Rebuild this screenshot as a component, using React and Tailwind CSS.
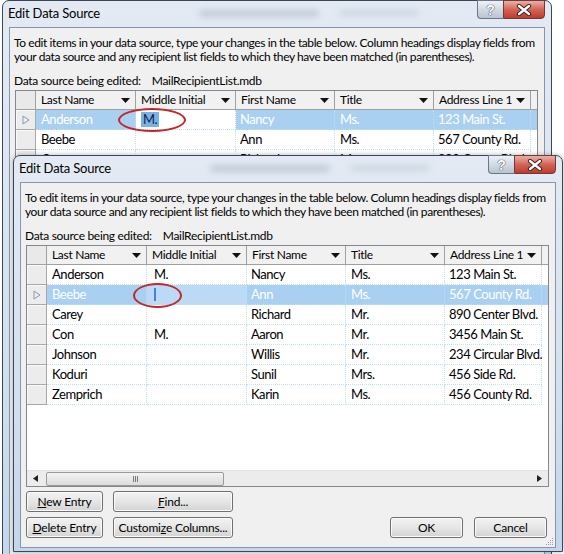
import React from "react";

const rows = [
  ["Anderson", "M.", "Nancy", "Ms.", "123 Main St."],
  ["Beebe", "", "Ann", "Ms.", "567 County Rd."],
  ["Carey", "", "Richard", "Mr.", "890 Center Blvd."],
  ["Con", "M.", "Aaron", "Mr.", "3456 Main St."],
  ["Johnson", "", "Willis", "Mr.", "234 Circular Blvd."],
  ["Koduri", "", "Sunil", "Mrs.", "456 Side Rd."],
  ["Zemprich", "", "Karin", "Ms.", "456 County Rd."],
];

const columns = [
  { label: "Last Name", w: "w-[100px]", pad: "pl-[5px]" },
  { label: "Middle Initial", w: "w-[100px]", pad: "pl-[7px]" },
  { label: "First Name", w: "w-[99px]", pad: "pl-[4px]" },
  { label: "Title", w: "w-[99px]", pad: "pl-[5px]" },
  { label: "Address Line 1", w: "w-[97px]", pad: "pl-[4px]" },
];

const DropArrow = () => (
  <svg width="9" height="5" viewBox="0 0 9 5" className="shrink-0">
    <path d="M0 0h9L4.5 5z" fill="#111" />
  </svg>
);

const CaptionButtons = () => (
  <div className="absolute right-0 top-[-1px] flex">
    <div className="w-[26px] h-[19px] rounded-bl-[4px] border border-[#6b7686] border-r-0 bg-gradient-to-b from-[#eef2f7] via-[#d2dae4] to-[#b9c4d2] flex items-center justify-center">
      <span className="text-[14px] leading-none font-bold text-white [text-shadow:0_0_1px_#2b3440,0_0_1px_#2b3440] font-['Liberation_Sans',sans-serif]">?</span>
    </div>
    <div className="w-[42px] h-[19px] rounded-br-[4px] border border-[#6b3a3a] bg-gradient-to-b from-[#eab0a6] via-[#d26457] to-[#c0392b] flex items-center justify-center">
      <svg width="16" height="12" viewBox="0 0 16 12">
        <path d="M3 2l10 8M13 2L3 10" stroke="#3b1d1d" strokeWidth="4.2" strokeLinecap="round" />
        <path d="M3 2l10 8M13 2L3 10" stroke="#fff" strokeWidth="2.4" strokeLinecap="round" />
      </svg>
    </div>
  </div>
);

const Button = ({ children, className }) => (
  <button
    className={
      "h-[21px] rounded-[3px] border border-[#707070] bg-gradient-to-b from-[#f2f2f2] via-[#e6e6e6] to-[#d3d3d3] text-[12px] tracking-[-0.2px] text-black leading-none shadow-[inset_0_0_0_1px_#fbfbfb] " +
      className
    }
  >
    {children}
  </button>
);

const ScrollBar = () => (
  <div className="h-[16px] bg-[#ececec] border-t border-[#e2e2e2] flex items-center relative">
    <svg width="5" height="7" viewBox="0 0 5 7" className="absolute left-[6px]">
      <path d="M5 0v7L0 3.5z" fill="#222" />
    </svg>
    <div className="absolute left-[19px] w-[178px] h-[14px] top-[1px] rounded-[2px] border border-[#9a9a9a] bg-gradient-to-b from-[#f3f3f3] to-[#dcdcdc] flex items-center justify-center gap-[1px]">
      <div className="w-[1px] h-[6px] bg-[#777]" />
      <div className="w-[1px] h-[6px] bg-[#777]" />
      <div className="w-[1px] h-[6px] bg-[#777]" />
    </div>
    <svg width="5" height="7" viewBox="0 0 5 7" className="absolute right-[6px]">
      <path d="M0 0v7l5-3.5z" fill="#222" />
    </svg>
  </div>
);

const DataTable = ({ selected, mode }) => (
  <div className="w-[523px] h-[242px] border border-[#828790] bg-white flex flex-col overflow-hidden">
    {/* column headings */}
    <div className="h-[19px] flex shrink-0 bg-[#f1f1f1] border-b border-[#a0a0a0]">
      <div className="w-[20px] shrink-0 border-r border-[#a0a0a0] bg-[#e9e9e9]" />
      {columns.map((c) => (
        <div
          key={c.label}
          className={`${c.w} shrink-0 border-r border-[#a0a0a0] flex items-center justify-between pl-[5px] pr-[5px] text-[12px] text-black tracking-[-0.3px] whitespace-nowrap`}
        >
          <span>{c.label}</span>
          <DropArrow />
        </div>
      ))}
      <div className="flex-1" />
    </div>

    {/* records */}
    <div className="flex-1 flex flex-col">
      {rows.map((r, i) => {
        const isSel = i === selected;
        return (
          <div key={r[0]} className="h-[20px] flex shrink-0">
            <div className="w-[20px] shrink-0 bg-[#ececec] border-r border-b border-[#a7a7a7] shadow-[inset_1px_1px_0_#fafafa] flex items-center justify-center">
              {isSel && (
                <svg width="8" height="10" viewBox="0 0 8 10">
                  <path d="M1 1v8l6-4z" fill="none" stroke="#8a9ab0" strokeWidth="1" />
                </svg>
              )}
            </div>
            {columns.map((c, j) => {
              const editing = isSel && j === 1;
              let bg = isSel ? "bg-[#a9cff1]" : "";
              if (editing && mode === "highlight") bg = "bg-white";
              if (editing && mode === "caret") bg = "bg-[#bcdaf5]";
              return (
                <div
                  key={c.label}
                  className={`${c.w} ${c.pad} ${bg} shrink-0 border-r border-b border-dotted border-[#bfe0ef] flex items-center text-[13px] tracking-[-0.45px] leading-none whitespace-nowrap ${
                    isSel ? "text-white" : "text-black"
                  }`}
                >
                  {editing && mode === "highlight" ? (
                    <span className="bg-[#79b1e8] text-[#0d2340] px-[2px] py-[1px] -ml-[2px]">{r[j]}</span>
                  ) : editing && mode === "caret" ? (
                    <span className="w-[2px] h-[13px] bg-[#3d86d6]" />
                  ) : (
                    r[j]
                  )}
                </div>
              );
            })}
            <div className={`flex-1 ${isSel ? "bg-[#a9cff1]" : ""}`} />
          </div>
        );
      })}
    </div>

    <ScrollBar />
  </div>
);

const EditDataSource = ({ className, selected, mode, ring }) => (
  <div
    className={
      "absolute w-[550px] rounded-t-[7px] border border-[#3a4656] bg-gradient-to-b from-[#e3eaf3] via-[#d7e2ef] to-[#c3d6ec] flex flex-col px-[6px] pb-[5px] font-['Lato',sans-serif] " +
      className
    }
  >
    {/* glass title bar */}
    <div className="h-[26px] shrink-0 relative flex items-center">
      <div className="absolute left-[190px] top-[9px] w-[120px] h-[7px] rounded-full bg-[#aab6c6] blur-[3px] opacity-60" />
      <div className="absolute left-[330px] top-[9px] w-[80px] h-[6px] rounded-full bg-[#b6c1cf] blur-[3px] opacity-50" />
      <span className="relative -ml-[1px] text-[13px] tracking-[-0.2px] text-black">Edit Data Source</span>
      <CaptionButtons />
    </div>

    <div className="flex-1 border border-[#8496ad] bg-[#f0f0f0] flex flex-col pl-[5px] pr-[7px] pt-[8px] pb-[9px] relative">
      <p className="-ml-[1px] text-[12px] leading-[14px] tracking-[-0.4px] text-black whitespace-nowrap">
        To edit items in your data source, type your changes in the table below. Column headings display fields from
        <br />
        your data source and any recipient list fields to which they have been matched (in parentheses).
      </p>
      <div className="-ml-[1px] mt-[10px] h-[14px] flex items-center gap-[11px] text-[12px] tracking-[-0.3px] text-black">
        <span>Data source being edited:</span>
        <span>MailRecipientList.mdb</span>
      </div>
      <div className="mt-[2px]">
        <DataTable selected={selected} mode={mode} />
      </div>
      <div className="mt-[4px] flex justify-between">
        <div className="grid grid-cols-[77px_120px] gap-x-[10px] gap-y-[5px]">
          <Button>
            <u>N</u>ew Entry
          </Button>
          <Button>
            <u>F</u>ind...
          </Button>
          <Button>
            <u>D</u>elete Entry
          </Button>
          <Button>
            Customi<u>z</u>e Columns...
          </Button>
        </div>
        <div className="flex items-end gap-[11px] pr-[1px]">
          <Button className="w-[73px]">OK</Button>
          <Button className="w-[73px]">Cancel</Button>
        </div>
      </div>
      {/* size grip */}
      <svg width="9" height="9" viewBox="0 0 9 9" className="absolute right-[1px] bottom-[1px]">
        <g fill="#a0a0a0">
          <rect x="7" y="1" width="1" height="1" />
          <rect x="5" y="3" width="1" height="1" />
          <rect x="7" y="3" width="1" height="1" />
          <rect x="3" y="5" width="1" height="1" />
          <rect x="5" y="5" width="1" height="1" />
          <rect x="7" y="5" width="1" height="1" />
          <rect x="1" y="7" width="1" height="1" />
          <rect x="3" y="7" width="1" height="1" />
          <rect x="5" y="7" width="1" height="1" />
          <rect x="7" y="7" width="1" height="1" />
        </g>
      </svg>
    </div>

    {/* red marker around the Middle Initial cell */}
    <div className={"absolute rounded-[50%] border-2 border-[#c4262a] " + ring} />
  </div>
);

export default function App() {
  return (
    <div className="relative w-[564px] h-[554px] overflow-hidden bg-white">
      <EditDataSource
        className="left-[2px] top-0 h-[580px]"
        selected={0}
        mode="highlight"
        ring="left-[115px] top-[107px] w-[68px] h-[24px]"
      />
      <EditDataSource
        className="left-[13px] top-[155px] h-[397px] shadow-[0_0_5px_rgba(0,0,0,0.3)]"
        selected={1}
        mode="caret"
        ring="left-[119px] top-[127px] w-[49px] h-[25px]"
      />
    </div>
  );
}
